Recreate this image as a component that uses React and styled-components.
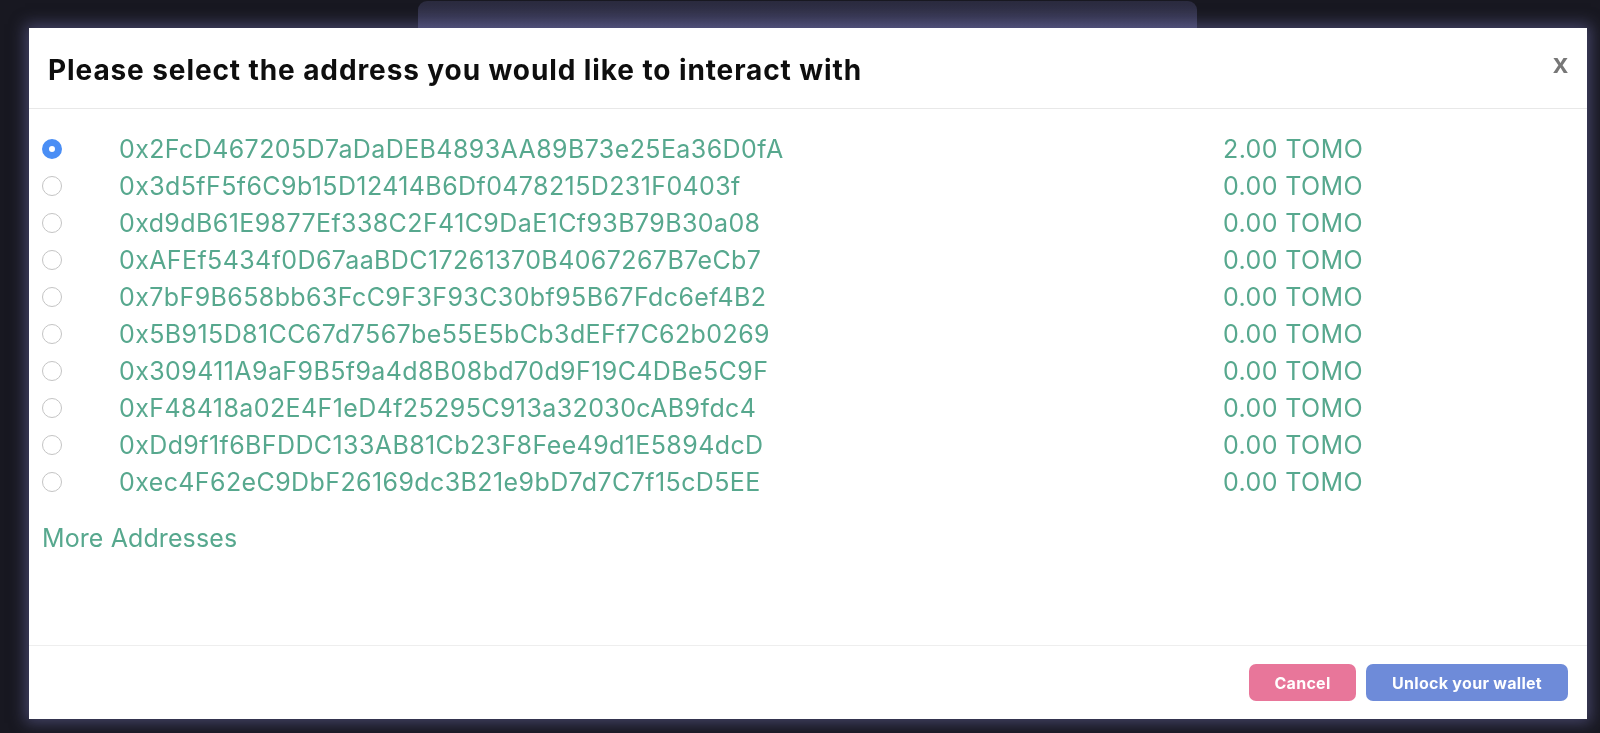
import React, { useState } from 'react'
import styled, { createGlobalStyle } from 'styled-components'

const accounts = [
  ['0x2FcD467205D7aDaDEB4893AA89B73e25Ea36D0fA', '2.00'],
  ['0x3d5fF5f6C9b15D12414B6Df0478215D231F0403f', '0.00'],
  ['0xd9dB61E9877Ef338C2F41C9DaE1Cf93B79B30a08', '0.00'],
  ['0xAFEf5434f0D67aaBDC17261370B4067267B7eCb7', '0.00'],
  ['0x7bF9B658bb63FcC9F3F93C30bf95B67Fdc6ef4B2', '0.00'],
  ['0x5B915D81CC67d7567be55E5bCb3dEFf7C62b0269', '0.00'],
  ['0x309411A9aF9B5f9a4d8B08bd70d9F19C4DBe5C9F', '0.00'],
  ['0xF48418a02E4F1eD4f25295C913a32030cAB9fdc4', '0.00'],
  ['0xDd9f1f6BFDDC133AB81Cb23F8Fee49d1E5894dcD', '0.00'],
  ['0xec4F62eC9DbF26169dc3B21e9bD7d7C7f15cD5EE', '0.00'],
]

const GlobalStyle = createGlobalStyle`
  html, body {
    margin: 0;
    height: 100%;
    overflow: hidden;
    background: #181821;
    font-family: Inter, "Noto Sans", sans-serif;
  }
`

export default function App() {
  const [selected, setSelected] = useState(0)

  return (
    <Page>
      <GlobalStyle />
      <BackCard />
      <Overlay>
        <Modal>
          <Header>
            <Title>Please select the address you would like to interact with</Title>
            <Close>x</Close>
          </Header>
          <Body>
            <List>
              {accounts.map(([address, balance], i) => (
                <Row key={address} onClick={() => setSelected(i)}>
                  <Radio checked={selected === i} />
                  <Address>{address}</Address>
                  <Balance>{balance} TOMO</Balance>
                </Row>
              ))}
            </List>
            <More>More Addresses</More>
          </Body>
          <Footer>
            <Button color="#e8769a">Cancel</Button>
            <Button color="#6e8bd9" wide>Unlock your wallet</Button>
          </Footer>
        </Modal>
      </Overlay>
    </Page>
  )
}

const Page = styled.div`
  height: 733px;
  display: flex;
  padding-left: 418px;
`

const BackCard = styled.div`
  width: 779px;
  height: 200px;
  margin-top: 1px;
  border-radius: 9px;
  background: linear-gradient(#2a2a3e, #3f3f5e 28px);
`

const Overlay = styled.div`
  position: fixed;
  inset: 0;
  padding: 28px 13px 14px 29px;
  display: flex;
`

const Modal = styled.div`
  flex: 1;
  display: flex;
  flex-direction: column;
  background: #fff;
  box-shadow: 0 0 14px 4px rgba(110, 110, 170, 0.5);
`

const Header = styled.div`
  height: 80px;
  display: flex;
  align-items: center;
  justify-content: space-between;
  padding: 0 19px;
  border-bottom: 1px solid #e8e8e8;
`

const Title = styled.h2`
  margin: 3px 0 0;
  font-size: 28px;
  font-weight: 700;
  color: #0e0e0e;
  letter-spacing: 0.9px;
`

const Close = styled.span`
  font-size: 27px;
  font-weight: 700;
  color: #777;
  font-family: "Liberation Sans", Arial, sans-serif;
  margin-top: -8px;
`

const Body = styled.div`
  flex: 1;
  padding: 21px 13px 0;
  color: #57a88e;
  font-size: 25px;
  letter-spacing: 0.4px;
`

const List = styled.div`
  display: flex;
  flex-direction: column;
`

const Row = styled.div`
  height: 37px;
  display: flex;
  align-items: center;
  cursor: pointer;
`

const Radio = styled.span`
  width: 20px;
  height: 20px;
  box-sizing: border-box;
  border-radius: 50%;
  border: ${p => (p.checked ? '7px solid #4a8ef5' : '1px solid #c4c4c4')};
  background: #fff;
`

const Address = styled.span`
  width: 1104px;
  margin-left: 57px;
`

const Balance = styled.span``

const More = styled.div`
  margin-top: 23px;
  letter-spacing: 0.1px;
`

const Footer = styled.div`
  height: 73px;
  border-top: 1px solid #eeeeee;
  display: flex;
  align-items: center;
  justify-content: flex-end;
  gap: 10px;
  padding: 0 19px 0;
`

const Button = styled.button`
  width: ${p => (p.wide ? '202px' : '107px')};
  height: 37px;
  border: none;
  border-radius: 7px;
  background: ${p => p.color};
  color: #fff;
  font-family: Inter, sans-serif;
  font-size: 16px;
  font-weight: 700;
  letter-spacing: 0.3px;
  cursor: pointer;
`
